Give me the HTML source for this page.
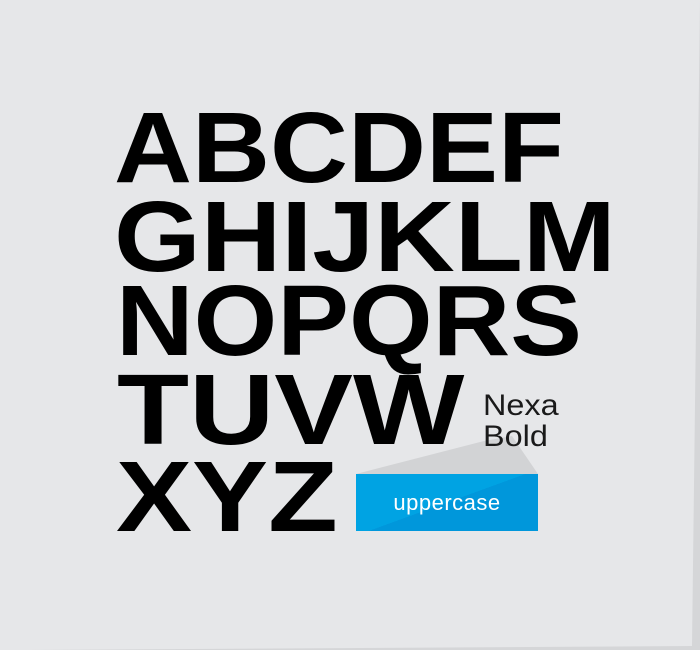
<!DOCTYPE html>
<html><head><meta charset="utf-8"><style>
html,body{margin:0;padding:0}
body{width:700px;height:650px;background:#d5d6d8;position:relative;overflow:hidden;font-family:"Liberation Sans",sans-serif}
.bg{position:absolute;left:0;top:0;width:700px;height:650px;background:#e6e7e9;clip-path:polygon(0 0,700px 0,692px 646px,30px 650px,0 650px)}
.r{position:absolute;font-weight:bold;font-size:100px;line-height:100px;color:#000;white-space:nowrap;transform-origin:0 0}
.t{position:absolute;font-size:30px;line-height:31px;color:#1a1a1a;left:483px;top:390px;transform:scaleX(1.08);transform-origin:0 0}
.box{position:absolute;left:356px;top:474px;width:182px;height:57px;background:linear-gradient(160deg,#00a3e3 0%,#00a3e3 50%,#0097db 50%,#0097db 100%);color:#fff;font-size:22px;text-align:center;line-height:57px;letter-spacing:0.5px}
</style></head><body>
<div class="bg"></div>
<svg style="position:absolute;left:0;top:0" width="700" height="650"><polygon points="356,474 484,441 512,436 538,474" fill="#d2d3d5"/></svg>
<div class="r" style="left:114px;top:98px;transform:scaleX(1.08)">ABCDEF</div>
<div class="r" style="left:114px;top:187px;transform:scaleX(1.115)">GHIJKLM</div>
<div class="r" style="left:116px;top:271px;transform:scaleX(1.075)">NOPQRS</div>
<div class="r" style="left:117px;top:360px;transform:scaleX(1.18)">TUVW</div>
<div class="r" style="left:116px;top:447px;transform:scaleX(1.14)">XYZ</div>
<div class="t">Nexa<br>Bold</div>
<div class="box">uppercase</div>
</body></html>
